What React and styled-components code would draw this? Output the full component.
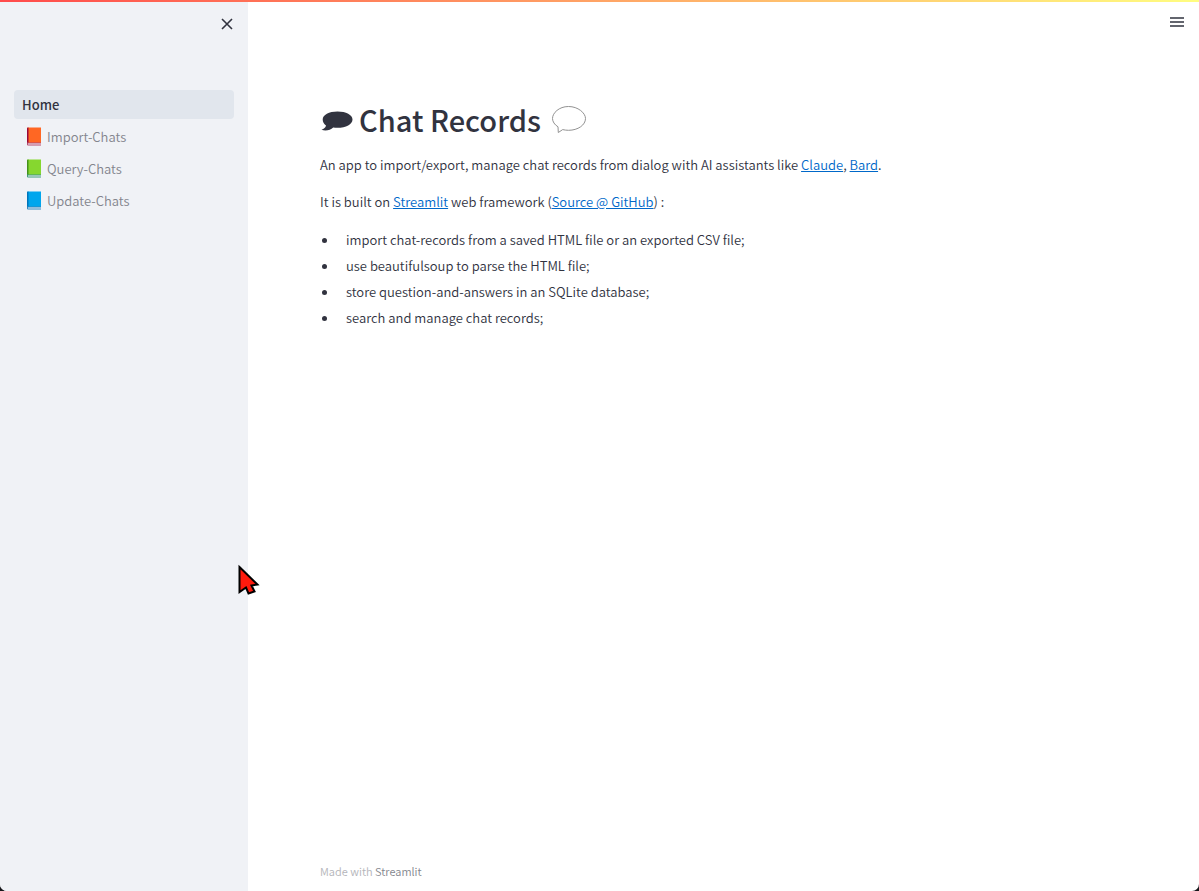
import React from "react";
import styled, { createGlobalStyle } from "styled-components";

const GlobalStyle = createGlobalStyle`
  *, *::before, *::after { box-sizing: border-box; }
  body {
    margin: 0;
    background: #16161a;
    color: #31333f;
    font-family: "Noto Sans CJK SC", "Noto Sans", sans-serif;
    font-size: 13px;
    font-weight: 350;
    line-height: 22px;
  }
`;

const Page = styled.div`
  position: relative;
  display: flex;
  flex-direction: column;
  min-height: 100vh;
  background: #fff;
  border-radius: 0 0 7px 7px;
  overflow: hidden;
`;

const Decoration = styled.div`
  height: 2px;
  background: linear-gradient(90deg, #ff4b4b, #fffd80);
`;

const Columns = styled.div`
  display: flex;
  flex: 1;
`;

const Sidebar = styled.aside`
  flex: 0 0 248px;
  padding: 12px 14px;
  background: #f0f2f6;
`;

const SidebarTop = styled.div`
  display: flex;
  justify-content: flex-end;
  height: 76px;
`;

const IconButton = styled.button`
  display: flex;
  width: 14px;
  height: 20px;
  padding: 0;
  align-items: center;
  justify-content: center;
  border: 0;
  background: none;
  color: #31333f;
  cursor: pointer;
`;

const NavList = styled.ul`
  display: flex;
  flex-direction: column;
  gap: 3px;
  margin: 0;
  padding: 0;
  list-style: none;
`;

const NavLink = styled.a`
  display: flex;
  align-items: center;
  gap: 5px;
  height: 29px;
  padding: 0 ${(p) => (p.$active ? 8 : 12)}px;
  border-radius: 4px;
  background: ${(p) => (p.$active ? "#e1e6ed" : "transparent")};
  color: ${(p) => (p.$active ? "#31333f" : "#83858d")};
  font-weight: ${(p) => (p.$active ? 500 : "inherit")};
  text-decoration: none;
`;

const Main = styled.main`
  display: flex;
  flex: 1;
  flex-direction: column;
  min-width: 0;
`;

const Toolbar = styled.header`
  display: flex;
  justify-content: flex-end;
  padding: 10px 15px;
`;

const Content = styled.section`
  flex: 1;
  padding: 57px 72px;
`;

const Title = styled.h1`
  display: flex;
  align-items: center;
  margin: 0 0 15px;
  gap: 6px;
  font-size: 29px;
  font-weight: 500;
  line-height: 40px;
`;

const Paragraph = styled.p`
  margin: 0 0 15px;
`;

const Link = styled.a`
  color: #0068c9;
  text-decoration: underline;
`;

const Features = styled.ul`
  display: flex;
  flex-direction: column;
  gap: 4px;
  margin: 16px 0 0;
  padding: 0;
  list-style: none;
`;

const Feature = styled.li`
  display: flex;
  align-items: center;
  gap: 19px;
  padding-left: 2px;

  &::before {
    content: "";
    flex: none;
    width: 5px;
    height: 5px;
    border-radius: 50%;
    background: #31333f;
  }
`;

const Footer = styled.footer`
  padding: 0 72px 9px;
  color: #b4b5ba;
  font-size: 11px;
`;

const FooterLink = styled.a`
  color: #83858d;
  text-decoration: none;
`;

const Pointer = styled.svg`
  position: absolute;
  left: 237px;
  top: 563px;
  pointer-events: none;
`;

function Book({ cover, spine, base }) {
  return (
    <svg width="16" height="20" viewBox="0 0 16 20" aria-hidden="true">
      <path d="M1 1.500Q1 .5 2 .5H15V16.500H1Z" fill={cover} />
      <path d="M1 1.500Q1 .5 2 .5H2.500V16.500H1Z" fill={spine} />
      <path d="M1 16H15V18H1Z" fill="#f4f4f8" />
      <path d="M1 15.500H15V16.500H2V17.500H15V18.500H2Q1 18.500 1 17.500Z" fill={base} />
    </svg>
  );
}

function FilledBubble() {
  return (
    <svg width="33" height="28" viewBox="0 0 33 28" aria-hidden="true">
      <path
        d="M17.500 6.500C26 6.500 32.500 10 32.500 14.500C32.500 19.200 26 22.800 17.500 22.800C16 22.800 14.500 22.700 13.200 22.400C10.500 25 6 26.200 1.500 24.800C4 24 5.600 22.500 6 20.500C3.800 19 2.700 16.800 2.700 14.500C2.700 10 9 6.500 17.500 6.500Z"
        fill="#31333f"
      />
    </svg>
  );
}

function OutlineBubble() {
  return (
    <svg width="48" height="30" viewBox="0 0 48 30" aria-hidden="true">
      <path
        d="M21.500 2.500C31 2.500 38.500 9 38.500 14.500C38.500 21 31 26.300 21.500 26.300C19.500 26.300 17.500 26 15.700 25.600L11.300 28.500L11 22.800C7.500 20.700 5.500 17.500 5.500 14.500C5.500 9 12 2.500 21.500 2.500Z"
        fill="#fff"
        stroke="#929292"
      />
    </svg>
  );
}

const PAGES = [
  { name: "Home", active: true },
  { name: "Import-Chats", book: { cover: "#ff6723", spine: "#990838", base: "#b5486c" } },
  { name: "Query-Chats", book: { cover: "#86d72f", spine: "#44911b", base: "#3d9a78" } },
  { name: "Update-Chats", book: { cover: "#00a6ed", spine: "#0074ba", base: "#2f86bd" } },
];

const FEATURES = [
  "import chat-records from a saved HTML file or an exported CSV file;",
  "use beautifulsoup to parse the HTML file;",
  "store question-and-answers in an SQLite database;",
  "search and manage chat records;",
];

export default function App() {
  return (
    <Page>
      <GlobalStyle />
      <Decoration />
      <Columns>
        <Sidebar>
          <SidebarTop>
            <IconButton type="button" aria-label="Close sidebar">
              <svg width="12" height="12" viewBox="0 0 12 12" fill="none" stroke="currentColor" strokeWidth="1.6">
                <path d="M1 1L11 11M11 1L1 11" />
              </svg>
            </IconButton>
          </SidebarTop>
          <nav aria-label="Pages">
            <NavList>
              {PAGES.map((page) => (
                <li key={page.name}>
                  <NavLink href="#" $active={page.active} aria-current={page.active ? "page" : undefined}>
                    {page.book && <Book {...page.book} />}
                    {page.name}
                  </NavLink>
                </li>
              ))}
            </NavList>
          </nav>
        </Sidebar>
        <Main>
          <Toolbar>
            <IconButton type="button" aria-label="Main menu">
              <svg width="14" height="10" viewBox="0 0 14 10" fill="none" stroke="currentColor" strokeWidth="1.5">
                <path d="M0 1H14M0 5H14M0 9H14" />
              </svg>
            </IconButton>
          </Toolbar>
          <Content>
            <Title>
              <FilledBubble />
              Chat Records
              <OutlineBubble />
            </Title>
            <Paragraph>
              An app to import/export, manage chat records from dialog with AI assistants like{" "}
              <Link href="#">Claude</Link>, <Link href="#">Bard</Link>.
            </Paragraph>
            <Paragraph>
              It is built on <Link href="#">Streamlit</Link> web framework (<Link href="#">Source @ GitHub</Link>) :
            </Paragraph>
            <Features>
              {FEATURES.map((text) => (
                <Feature key={text}>{text}</Feature>
              ))}
            </Features>
          </Content>
          <Footer>
            Made with <FooterLink href="#">Streamlit</FooterLink>
          </Footer>
        </Main>
      </Columns>
      <Pointer width="24" height="34" viewBox="0 0 24 34" aria-hidden="true">
        <path
          d="M2.500 4L20.500 21.500L14.500 22.500L17.500 28.500L11.500 30.500L9 24.500L2.500 29Z"
          fill="#ff1a0d"
          stroke="#000"
          strokeWidth="2"
        />
      </Pointer>
    </Page>
  );
}
